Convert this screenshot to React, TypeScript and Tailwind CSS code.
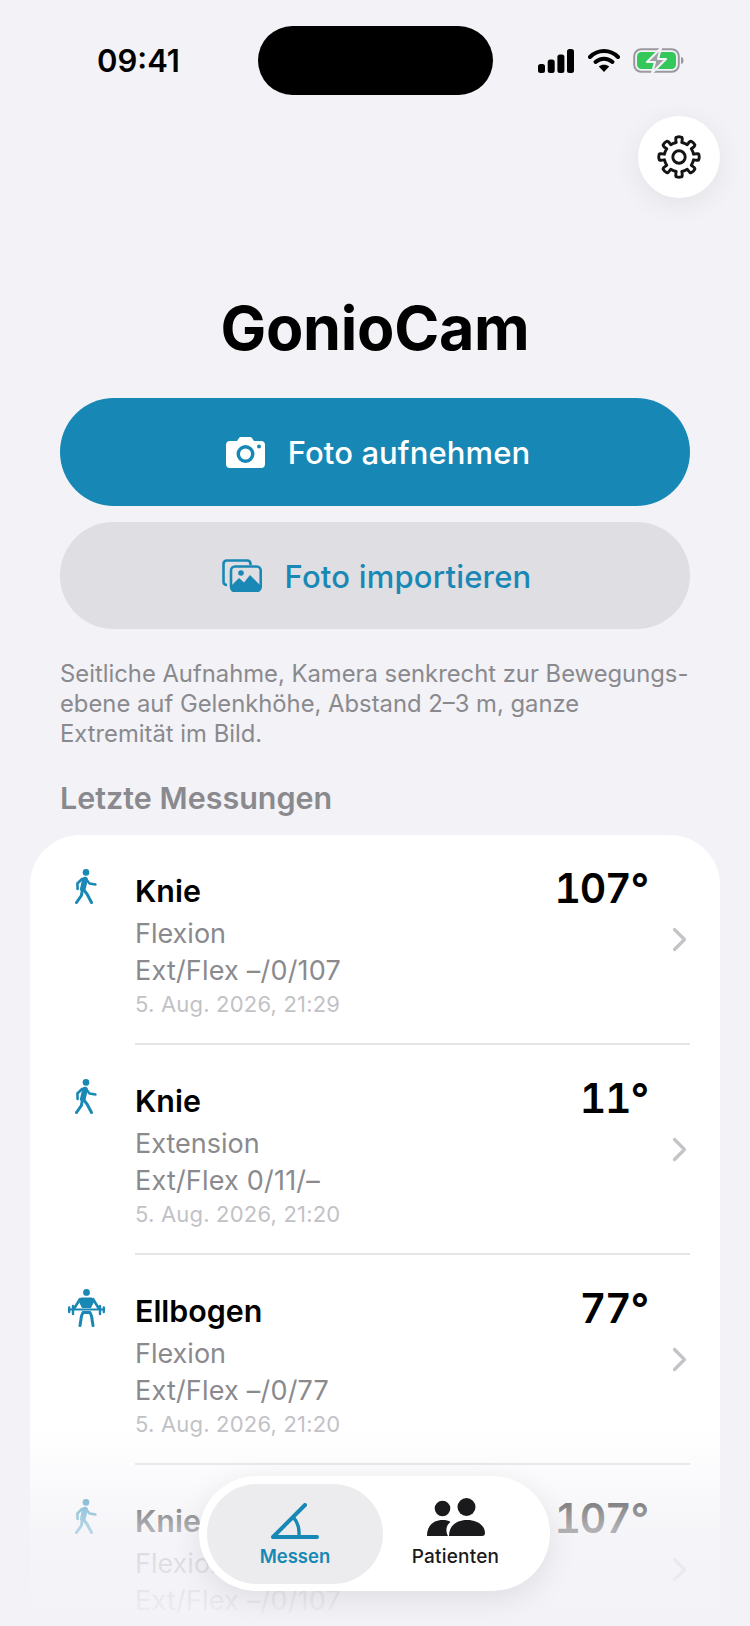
import React from "react";

const gearPath = (() => {
  const cx = 22;
  const cy = 22;
  const outer = 20;
  const root = 14.8;
  const pt = (r: number, deg: number) => {
    const a = ((deg - 90) * Math.PI) / 180;
    return `${(cx + r * Math.cos(a)).toFixed(2)} ${(cy + r * Math.sin(a)).toFixed(2)}`;
  };
  let d = "";
  for (let i = 0; i < 8; i++) {
    const a = i * 45;
    d += `${i === 0 ? "M" : "A14.8 14.8 0 0 1"} ${pt(root, a - 11)} `;
    d += `Q ${pt(outer + 0.6, a - 11)} ${pt(outer, a - 6)} `;
    d += `Q ${pt(outer + 0.6, a)} ${pt(outer, a + 6)} `;
    d += `Q ${pt(outer + 0.6, a + 11)} ${pt(root, a + 11)} `;
  }
  d += `A14.8 14.8 0 0 1 ${pt(root, -11)} Z`;
  return d;
})();

const Gear = () => (
  <svg width="44" height="44" viewBox="0 0 44 44" fill="none" stroke="#141416" strokeWidth="2.9" strokeLinejoin="round">
    <path d={gearPath} />
    <circle cx="22" cy="22" r="6.2" />
  </svg>
);

const Walk = () => (
  <svg width="22" height="35" viewBox="0 0 22 35">
    <circle cx="11" cy="3.4" r="3.3" fill="#1a88b5" />
    <path d="M10 10.5 L7.8 20" stroke="#1a88b5" strokeWidth="5.6" strokeLinecap="round" fill="none" />
    <path d="M11 10 L14.5 14.5 L20.5 15.5" stroke="#1a88b5" strokeWidth="2.4" strokeLinecap="round" strokeLinejoin="round" fill="none" />
    <path d="M7 10 L2.4 14.5 L2.6 20" stroke="#1a88b5" strokeWidth="2.6" strokeLinecap="round" strokeLinejoin="round" fill="none" />
    <path d="M8 20 L12 25 L16.5 33.5" stroke="#1a88b5" strokeWidth="3" strokeLinecap="round" strokeLinejoin="round" fill="none" />
    <path d="M7 23 L6.4 26.5 L1.5 33.5" stroke="#1a88b5" strokeWidth="3" strokeLinecap="round" strokeLinejoin="round" fill="none" />
  </svg>
);

const Lift = () => (
  <svg width="37" height="38" viewBox="0 0 37 38">
    <circle cx="18.5" cy="3.4" r="3.4" fill="#1a88b5" />
    <path d="M13 8.5 H24 L26 13 L23 19 H14 L11 13 Z" fill="#1a88b5" />
    <path d="M12 10 L6.5 19 M25 10 L30.5 19" stroke="#1a88b5" strokeWidth="2.6" strokeLinecap="round" fill="none" />
    <path d="M2 20.5 H35" stroke="#1a88b5" strokeWidth="2.2" strokeLinecap="round" />
    <path d="M1.2 18.5 V23 M5 17 V25 M32 17 V25 M35.8 18.5 V23" stroke="#1a88b5" strokeWidth="2.4" strokeLinecap="round" />
    <path d="M15 23.5 H22 L23.5 27 L25 36.5 M15 23.5 L13.5 27 L12 36.5" stroke="#1a88b5" strokeWidth="3" strokeLinecap="round" strokeLinejoin="round" fill="none" />
  </svg>
);

const Chevron = () => (
  <svg width="15" height="25" viewBox="0 0 15 25" fill="none">
    <path d="M2.5 2.5 L12.5 12.5 L2.5 22.5" stroke="#c4c4c8" strokeWidth="3.2" strokeLinecap="round" strokeLinejoin="round" />
  </svg>
);

type RowData = { icon: React.ReactNode; name: string; kind: string; ef: string; date?: string; value: string };

const rows: RowData[] = [
  { icon: <Walk />, name: "Knie", kind: "Flexion", ef: "Ext/Flex –/0/107", date: "5. Aug. 2026, 21:29", value: "107°" },
  { icon: <Walk />, name: "Knie", kind: "Extension", ef: "Ext/Flex 0/11/–", date: "5. Aug. 2026, 21:20", value: "11°" },
  { icon: <Lift />, name: "Ellbogen", kind: "Flexion", ef: "Ext/Flex –/0/77", date: "5. Aug. 2026, 21:20", value: "77°" },
  { icon: <Walk />, name: "Knie", kind: "Flexion", ef: "Ext/Flex –/0/107", value: "107°" },
];

const Row = ({ r }: { r: RowData }) => (
  <div className="flex h-[210px] shrink-0">
    <div className="w-[105px] shrink-0 pl-[30px] pt-[34px]">
      <div className="flex w-[52px] justify-center">{r.icon}</div>
    </div>
    <div className="mr-[30px] flex flex-1 border-b-2 border-[#e5e5e7]">
      <div className="flex-1 pt-[37px]">
        <div className="text-[30.4px] leading-[38px] font-semibold text-black">{r.name}</div>
        <div className="mt-[6px] text-[27px] leading-[36px] text-[#8a8a8e]">{r.kind}</div>
        <div className="mt-px text-[27px] leading-[36px] tracking-[0.2px] text-[#8a8a8e]">{r.ef}</div>
        {r.date && <div className="text-[22px] leading-[30px] tracking-[0.2px] text-[#c2c2c6]">{r.date}</div>}
      </div>
      <div className="mr-[24px] pt-[28px] text-[41px] leading-[50px] font-semibold tabular-nums tracking-[-1.2px] text-black">{r.value}</div>
      <div className="self-center pr-[3px]"><Chevron /></div>
    </div>
  </div>
);

export default function App() {
  return (
    <div
      className="relative h-[1626px] w-[750px] overflow-hidden bg-[#f2f2f7]"
      style={{ fontFamily: "Inter, 'Noto Sans', sans-serif" }}
    >
      {/* status bar */}
      <div className="flex h-[116px] items-start pt-[26px]">
        <div className="w-[258px] pl-[97px] pt-[17px] text-[31px] leading-[36px] font-semibold text-black">09:41</div>
        <div className="h-[69px] w-[235px] rounded-full bg-black" />
        <div className="flex items-center pl-[45px] pt-[22px]">
          <svg width="36" height="24" viewBox="0 0 36 24" fill="black">
            <rect x="0" y="15" width="7" height="9" rx="2.5" />
            <rect x="9.7" y="10.5" width="7" height="13.5" rx="2.5" />
            <rect x="19.4" y="5.5" width="7" height="18.5" rx="2.5" />
            <rect x="29" y="0" width="7" height="24" rx="2.5" />
          </svg>
          <svg width="32" height="23" viewBox="0 0 32 23" fill="none" className="ml-[14px]">
            <path d="M2 8 C10 0 22 0 30 8" stroke="black" strokeWidth="4" strokeLinecap="round" />
            <path d="M7.5 13 C12.5 8.5 19.5 8.5 24.5 13" stroke="black" strokeWidth="4" strokeLinecap="round" />
            <path d="M16 23 L10.8 17.5 C13.5 15 18.5 15 21.2 17.5 Z" fill="black" />
          </svg>
          <svg width="51" height="25" viewBox="0 0 51 25" fill="none" className="ml-[13px]">
            <rect x="1.2" y="1.2" width="44.6" height="22.6" rx="7" stroke="#9a9a9e" strokeWidth="2" />
            <rect x="4" y="4" width="39" height="17" rx="4.5" fill="#34c759" />
            <path d="M48 9 C50 9.5 50.5 10.8 50.5 12.5 C50.5 14.2 50 15.5 48 16 Z" fill="#9a9a9e" />
            <path d="M28 0 L14 14 H22 L19 25 L33 11 H25 Z" fill="#a0a0a4" stroke="#f2f2f7" strokeWidth="2.2" strokeLinejoin="round" />
          </svg>
        </div>
      </div>

      {/* settings */}
      <div className="flex justify-end pr-[30px]">
        <div className="flex h-[82px] w-[82px] items-center justify-center rounded-full bg-white shadow-[0_6px_28px_rgba(0,0,0,0.07)]">
          <Gear />
        </div>
      </div>

      <h1 className="mt-[95px] text-center text-[61px] leading-[70px] font-bold tracking-[-0.3px] text-black">GonioCam</h1>

      {/* buttons */}
      <div className="mx-[60px] mt-[35px] flex flex-col gap-[16px]">
        <div className="flex h-[108px] items-center justify-center gap-[23px] rounded-[54px] bg-[#1788b5] pl-[6px]">
          <svg width="39" height="31" viewBox="0 0 39 31">
            <path fillRule="evenodd" fill="white" d="M4 4 H11 L13 1 Q13.5 0 15 0 H24 Q25.5 0 26 1 L28 4 H35 Q39 4 39 8 V27 Q39 31 35 31 H4 Q0 31 0 27 V8 Q0 4 4 4 Z M19.5 8 A9 9 0 1 0 19.5 26 A9 9 0 1 0 19.5 8 Z M19.5 11.5 A5.5 5.5 0 1 1 19.5 22.5 A5.5 5.5 0 1 1 19.5 11.5 Z M33 7.5 A2 2 0 1 0 33 11.5 A2 2 0 1 0 33 7.5 Z" />
          </svg>
          <span className="pt-[2px] text-[31px] font-medium leading-[40px] tracking-[0.1px] text-white">Foto aufnehmen</span>
        </div>
        <div className="flex h-[107px] items-center justify-center gap-[23px] rounded-[54px] bg-[#dedee3] pl-[3px]">
          <svg width="40" height="33" viewBox="0 0 40 33" fill="none">
            <path d="M5 26 Q1.5 26 1.5 22.5 V5 Q1.5 1.5 5 1.5 H25 Q28.5 1.5 28.5 5 V6" stroke="#1a88b5" strokeWidth="2.6" />
            <rect x="9" y="7.5" width="29.7" height="24.2" rx="4" stroke="#1a88b5" strokeWidth="2.6" />
            <path d="M9 31 V27 L17 19 L22 23.5 L28 16 L39 27 V29 Q39 33 35 33 H13 Q9 33 9 31 Z" fill="#1a88b5" />
            <circle cx="19" cy="14" r="2.8" fill="#1a88b5" />
          </svg>
          <span className="pt-[2px] text-[31px] font-medium leading-[40px] tracking-[0.2px] text-[#1a88b5]">Foto importieren</span>
        </div>
      </div>

      <p className="ml-[60px] mt-[30px] whitespace-nowrap text-[23.8px] leading-[30px] text-[#8a8a8e]">
        Seitliche Aufnahme, Kamera senkrecht zur Bewegungs-
        <br />
        ebene auf Gelenkhöhe, Abstand 2–3 m, ganze
        <br />
        Extremität im Bild.
      </p>

      <h2 className="mx-[60px] mt-[29px] text-[30.5px] leading-[40px] font-semibold text-[#8a8a8e]">Letzte Messungen</h2>

      {/* list */}
      <div className="mx-[30px] mt-[17px] flex h-[840px] flex-col rounded-[50px] bg-white">
        {rows.map((r, i) => (
          <Row key={i} r={r} />
        ))}
      </div>

      {/* fade */}
      <div className="absolute inset-x-0 bottom-0 h-[196px] bg-gradient-to-b from-[#f2f2f700] via-[#f2f2f7b8] to-[#f2f2f7f8]" />

      {/* tab bar */}
      <div className="absolute left-[199px] top-[1476px] flex h-[115px] w-[351px] items-center rounded-[58px] bg-white pl-[8px] shadow-[0_8px_32px_rgba(0,0,0,0.09)]">
        <div className="flex h-[100px] w-[176px] flex-col items-center rounded-[50px] bg-[#ececee] pt-[19px]">
          <svg width="48" height="36" viewBox="0 0 48 36" fill="none">
            <path d="M34 2 L2 34 H46" stroke="#1788b5" strokeWidth="4" strokeLinecap="round" strokeLinejoin="round" />
            <path d="M22 14 C27 19 28.5 26 28 33" stroke="#1788b5" strokeWidth="3.4" />
          </svg>
          <span className="mt-[4px] text-[18.5px] leading-[26px] font-semibold text-[#1788b5]">Messen</span>
        </div>
        <div className="flex flex-1 flex-col items-center pr-[22px]">
          <svg width="58" height="38" viewBox="0 0 58 38" fill="#1a1a1c">
            <circle cx="15.5" cy="10.5" r="7.8" />
            <circle cx="39.5" cy="9" r="9" />
            <path d="M0 38 C0 28 6 22 15.5 22 C19 22 21.5 22.6 23.5 24 C19.5 27 18 32 21 38 Z" />
            <path d="M22 38 C22 28 29 22 40 22 C51 22 58 28 58 35 Q58 38 55 38 Z" />
          </svg>
          <span className="mt-[8px] text-[19px] leading-[26px] font-medium tracking-[0.2px] text-[#1a1a1c]">Patienten</span>
        </div>
      </div>
    </div>
  );
}
